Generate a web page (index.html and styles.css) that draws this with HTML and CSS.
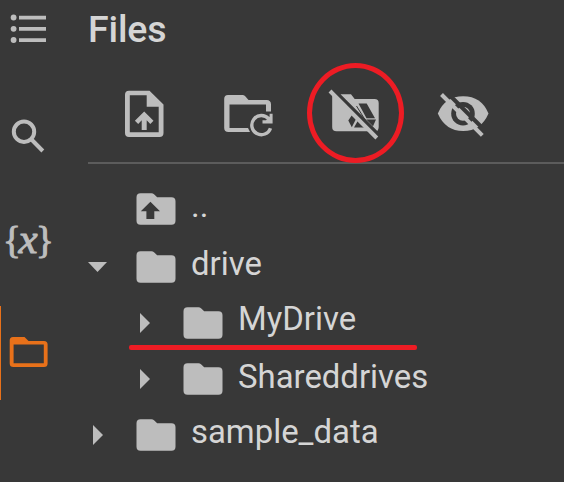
FILE: index.html
```html
<!DOCTYPE html>
<html lang="en">
<head>
<meta charset="utf-8">
<title>Files</title>
<link rel="stylesheet" href="styles.css">
</head>
<body>
<svg class="defs" width="0" height="0" aria-hidden="true">
  <symbol id="folder" viewBox="0 0 40 32"><path d="M4.500 .3H15.500Q17 .3 18 1.300L21.200 4.300H35.500Q39.500 4.300 39.500 8.300V27.700Q39.500 31.700 35.500 31.700H4.500Q.5 31.700 .5 27.700V4.300Q.5.3 4.500.3Z"/></symbol>
</svg>
<div class="app">
  <nav class="rail">
    <svg class="rail-list" viewBox="10 13 38 31"><circle cx="13.600" cy="17.500" r="2.900"/><circle cx="13.600" cy="28.800" r="2.900"/><circle cx="13.600" cy="40" r="2.900"/><path d="M19 15.700H46V19.500H19ZM19 27H46V30.800H19ZM19 38.200H46V42H19Z"/></svg>
    <svg class="rail-search" viewBox="10 118 38 36"><circle class="line" cx="24" cy="131.700" r="10.200"/><path class="line" d="M31.500 139.500L42.800 151"/></svg>
    <svg class="rail-vars" viewBox="0 214 60 60"><text y="253"><tspan class="brace" x="3">{</tspan><tspan class="var" x="18.500">x</tspan><tspan class="brace" x="36">}</tspan></text></svg>
    <div class="rail-active">
      <svg viewBox="9 336 40 32"><path fill-rule="evenodd" d="M13 337H24.500L28.500 341H44Q47.600 341 47.600 344.500V363.500Q47.600 367 44 367H13.500Q9.700 367 9.700 363.500V340.500Q9.700 337 13 337ZM13.600 344.500V363.300H43.800V344.500Z"/></svg>
    </div>
  </nav>
  <main class="panel">
    <h1 class="title">Files</h1>
    <div class="toolbar">
      <svg class="tool-upload" viewBox="124 90 42 50"><path fill-rule="evenodd" d="M129 91.800H149.500L163.500 105.500V134Q163.500 138 159.500 138H129Q125 138 125 134V95.800Q125 91.800 129 91.800ZM129.800 96.300V133.300H158.700V107.700H146.700V96.300ZM144.200 112.500L153.500 121.700L150.300 125L146.700 121.300V131H141.700V121.300L138.200 125L134.900 121.700Z"/></svg>
      <svg class="tool-refresh" viewBox="222 90 54 50"><path d="M228 96H242.500Q244 96 245 97L248.500 101H266.500Q271 101 271 105.500V112.500H266V105.500H229.500V129H248L250 133H228.500Q224.200 133 224.200 129V100Q224.200 96 228 96Z"/><path class="line refresh-line" d="M270.500 129.200A9.600 9.600 0 1 1 268.500 119.600"/><path d="M272.600 114.800V124.600H262.500V121.200H266L269.600 117.500V114.800Z"/></svg>
      <svg class="tool-drive" viewBox="326 88 56 56"><path d="M332.200 95L370.500 133.300H336.500Q332.200 133.300 332.200 129Z"/><path d="M340.500 96.300H351L354.700 101H374.500Q378.700 101 378.700 105V129Q378.700 131.300 377.300 133.100Z"/><path class="cut" d="M358.500 105.500H366.700L375 120.200H366.500ZM348.300 122.500L352 117L356 121L351.800 129.300ZM358 122.500L364.500 129.500H354ZM366.200 121.500H376L373 128.300Z"/><path class="seam" d="M356.500 108L365.500 122.500"/><path class="line" d="M330 93L376.800 140"/></svg>
      <svg class="tool-eye" viewBox="436 91 54 48"><path d="M437.800 114.500Q445 97.300 463.200 97.300T488.500 114.500Q481 132 463.200 132T437.800 114.500Z"/><circle class="cut" cx="463" cy="114.700" r="11.800"/><circle cx="463" cy="114.700" r="7"/><path class="cut-line" d="M445 91.500L486 132.500"/><path class="line" d="M441.500 95.500L482.300 136.300"/></svg>
    </div>
    <div class="tree">
      <div class="row"><span class="arrow"></span><svg class="folder" viewBox="0 0 40 32"><use href="#folder"/><path class="cut" d="M14.400 8.700L24 18.200H18.300V26H10.400V18.200H4.800Z"/></svg><span class="name">..</span></div>
      <div class="row"><span class="arrow"><svg class="down" viewBox="0 0 19 10"><path d="M0 0H19L9.500 10Z"/></svg></span><svg class="folder"><use href="#folder"/></svg><span class="name">drive</span></div>
      <div class="row child short"><span class="arrow"><svg class="right" viewBox="0 0 10 20"><path d="M0 0L10 10L0 20Z"/></svg></span><svg class="folder"><use href="#folder"/></svg><span class="name mydrive">MyDrive</span></div>
      <div class="row child"><span class="arrow"><svg class="right" viewBox="0 0 10 20"><path d="M0 0L10 10L0 20Z"/></svg></span><svg class="folder"><use href="#folder"/></svg><span class="name shared">Shareddrives</span></div>
      <div class="row short"><span class="arrow"><svg class="right" viewBox="0 0 10 20"><path d="M0 0L10 10L0 20Z"/></svg></span><svg class="folder"><use href="#folder"/></svg><span class="name">sample_data</span></div>
    </div>
  </main>
  <div class="ring"></div>
  <div class="underline"></div>
</div>
</body>
</html>
```
FILE: styles.css
```css
* { box-sizing: border-box; }
body { margin: 0; background: #383838; color: #d5d5d5; font-family: Roboto, "Liberation Sans", sans-serif; }
svg { display: block; flex: none; fill: #bdbdbd; }
.defs { position: absolute; }
.app { position: relative; display: flex; width: 564px; height: 482px; overflow: hidden; }
.line { fill: none; stroke: #bdbdbd; stroke-width: 4; }
.refresh-line { stroke-width: 3.400; }
.cut { fill: #383838; }
.cut-line { stroke: #383838; stroke-width: 4; }
.seam { stroke: #383838; stroke-width: 1; }

.rail { width: 88px; flex: none; padding-top: 13px; }
.rail-list { width: 38px; height: 31px; margin-left: 10px; }
.rail-search { width: 38px; height: 36px; margin: 74px 0 0 10px; }
.rail-vars { width: 60px; height: 60px; margin-top: 60px; }
.brace { font: 37px "Liberation Serif", serif; stroke: #bdbdbd; stroke-width: 1; }
.var { font: italic 43px "Liberation Serif", serif; stroke: #bdbdbd; stroke-width: 1; }
.rail-active { height: 94px; margin-top: 32px; padding: 30px 0 0 8px; border-left: 1px solid #e8711a; }
.rail-active svg { width: 40px; height: 32px; fill: #e8711a; }

.panel { flex: 1; min-width: 0; }
.title { height: 58px; margin: 0; font-size: 37.500px; font-weight: 500; line-height: 59px; letter-spacing: -0.150px; }
.toolbar { display: flex; align-items: center; height: 106px; padding: 8px 0 0 36px; border-bottom: 2px solid #5c5c5c; }
.tool-upload { width: 42px; height: 50px; }
.tool-refresh { width: 54px; height: 50px; margin-left: 56px; }
.tool-drive { width: 56px; height: 56px; margin-left: 50px; }
.tool-eye { width: 54px; height: 48px; margin-left: 54px; }

.tree { padding-top: 16px; }
.row { display: flex; align-items: center; height: 58px; }
.row.short { height: 54px; }
.row.child { padding-left: 47px; }
.arrow { display: flex; width: 48px; flex: none; }
.down { width: 19px; height: 10px; }
.right { width: 10px; height: 20px; margin-left: 5px; }
.folder { width: 40px; height: 32px; }
.name { margin-left: 15px; padding-bottom: 7px; font-size: 32.900px; line-height: 40px; white-space: nowrap; }
.name.mydrive { padding-bottom: 9px; }
.name.shared { padding-bottom: 5px; }

.ring { position: absolute; left: 307px; top: 63px; width: 97px; height: 100px; border: 5px solid #ed1c24; border-radius: 50%; }
.underline { position: absolute; left: 129px; top: 345px; width: 288px; height: 5px; border-radius: 2px; background: #ed1c24; }
```
